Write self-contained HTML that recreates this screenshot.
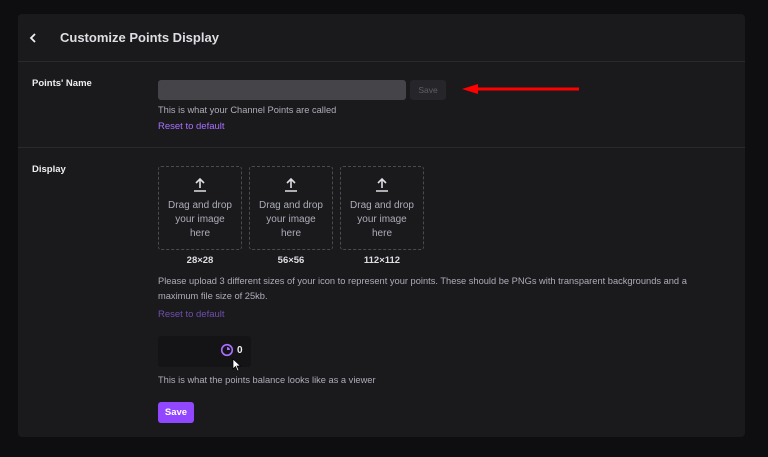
<!DOCTYPE html>
<html><head><style>
*{margin:0;padding:0;box-sizing:border-box}
body{width:768px;height:457px;background:#0e0e10;font-family:"Liberation Sans",sans-serif;position:relative;overflow:hidden;color:#efeff1}
.panel{position:absolute;left:18px;top:14px;width:727px;height:423px;background:#1a1a1d;border-radius:4px}
.hdr{position:absolute;left:0;top:0;width:100%;height:48px;border-bottom:1px solid #2a2a2e}
.abs{position:absolute}
.lbl{font-size:9.5px;font-weight:bold;color:#efeff1}
.small{font-size:9.3px;color:#adadb8}
.box{position:absolute;width:84px;height:84px;border:1px dashed #4a4a50;border-radius:3px;text-align:center;color:#adadb8;font-size:10px;line-height:14px}
.cap{position:absolute;width:84px;text-align:center;font-size:9.5px;font-weight:bold;color:#dedee3}
</style></head><body>
<div class="panel">
 <div class="hdr">
  <svg class="abs" style="left:10px;top:18px" width="10" height="12"><path d="M7 2 L3 6 L7 10" stroke="#efeff1" stroke-width="1.8" fill="none"/></svg>
  <div class="abs" style="left:42px;top:16px;font-size:13px;font-weight:bold;color:#dedee3">Customize Points Display</div>
 </div>
 <div class="abs" style="left:0;top:133px;width:100%;height:1px;background:#2a2a2e"></div>
 <div class="abs lbl" style="left:14px;top:64px">Points' Name</div>
 <div class="abs" style="left:140px;top:66px;width:248px;height:20px;background:#444449;border-radius:3px"></div>
 <div class="abs" style="left:392px;top:66px;width:36px;height:20px;background:#26262a;border-radius:3px;font-size:8.5px;color:#5e5e64;text-align:center;line-height:20px">Save</div>
 <div class="abs small" style="left:140px;top:91px">This is what your Channel Points are called</div>
 <div class="abs" style="left:140px;top:107px;font-size:9.5px;color:#a970ff">Reset to default</div>
 <div class="abs lbl" style="left:14px;top:150px">Display</div>
</div>
<svg class="abs" style="left:458px;top:83px" width="124" height="12"><path d="M4 6 L20 1 L20 11 Z" fill="#f00"/><rect x="18" y="4.5" width="103" height="3" fill="#f00"/></svg>
<div class="box" style="left:158px;top:166px"><svg width="14" height="16" style="margin-top:10px"><path d="M7 2V11M3 6L7 2L11 6M1 14H13" stroke="#dedee3" stroke-width="1.6" fill="none"/></svg><div style="margin-top:1px">Drag and drop<br>your image<br>here</div></div>
<div class="box" style="left:249px;top:166px"><svg width="14" height="16" style="margin-top:10px"><path d="M7 2V11M3 6L7 2L11 6M1 14H13" stroke="#dedee3" stroke-width="1.6" fill="none"/></svg><div style="margin-top:1px">Drag and drop<br>your image<br>here</div></div>
<div class="box" style="left:340px;top:166px"><svg width="14" height="16" style="margin-top:10px"><path d="M7 2V11M3 6L7 2L11 6M1 14H13" stroke="#dedee3" stroke-width="1.6" fill="none"/></svg><div style="margin-top:1px">Drag and drop<br>your image<br>here</div></div>
<div class="cap" style="left:158px;top:255px">28×28</div>
<div class="cap" style="left:249px;top:255px">56×56</div>
<div class="cap" style="left:340px;top:255px">112×112</div>
<div class="abs small" style="left:158px;top:274px;width:565px;line-height:15px">Please upload 3 different sizes of your icon to represent your points. These should be PNGs with transparent backgrounds and a maximum file size of 25kb.</div>
<div class="abs" style="left:158px;top:309px;font-size:9.5px;color:#6f4fae">Reset to default</div>
<div class="abs" style="left:158px;top:336px;width:93px;height:31px;background:#141416;border-radius:3px"></div>
<svg class="abs" style="left:220px;top:343px" width="14" height="14"><circle cx="7" cy="7" r="5.3" stroke="#a970ff" stroke-width="1.6" fill="none"/><path d="M7 4 A3 3 0 0 1 10 7 L7 7Z" fill="#a970ff"/></svg>
<div class="abs" style="left:237px;top:345px;font-size:10px;font-weight:bold;color:#efeff1">0</div>
<svg class="abs" style="left:232px;top:358px" width="10" height="14"><path d="M1 1 L1 11 L3.5 8.5 L5.5 13 L7 12.3 L5 8 L8.5 8 Z" fill="#fff" stroke="#000" stroke-width=".7"/></svg>
<div class="abs small" style="left:158px;top:375px">This is what the points balance looks like as a viewer</div>
<div class="abs" style="left:158px;top:402px;width:36px;height:21px;background:#9147ff;border-radius:3px;font-size:9.5px;font-weight:bold;color:#fff;text-align:center;line-height:21px">Save</div>
</body></html>
